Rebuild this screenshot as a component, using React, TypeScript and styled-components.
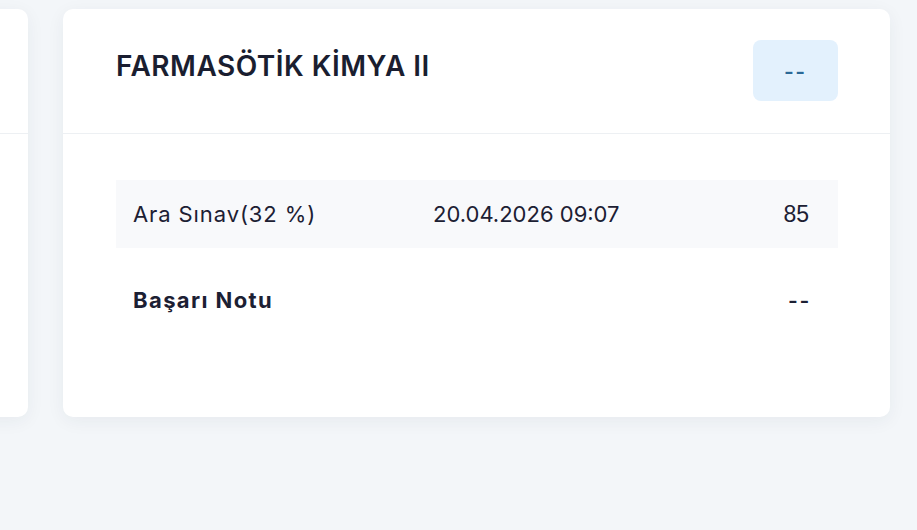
import { createGlobalStyle, styled } from 'styled-components';

interface GradeRow {
  label: string;
  date?: string;
  score: string;
  total?: boolean;
}

const rows: GradeRow[] = [
  { label: 'Ara Sınav(32 %)', date: '20.04.2026 09:07', score: '85' },
  { label: 'Başarı Notu', score: '--', total: true },
];

const GlobalStyle = createGlobalStyle`
  html, body {
    margin: 0;
    padding: 0;
    background: #f3f6f9;
  }
  body {
    font-family: Inter, "Noto Sans", sans-serif;
    color: #1c2033;
  }
`;

const App = () => {
  return (
    <>
      <GlobalStyle />
      <Page>
        <SideCard>
          <SideHeader />
        </SideCard>
        <Card>
          <Header>
            <Title>FARMASÖTİK KİMYA II</Title>
            <Badge>--</Badge>
          </Header>
          <Body>
            {rows.map((row) => (
              <Row key={row.label} $total={row.total}>
                <Label $bold={row.total}>{row.label}</Label>
                <DateCell>{row.date}</DateCell>
                <Score $dash={row.score === '--'}>{row.score}</Score>
              </Row>
            ))}
          </Body>
        </Card>
      </Page>
    </>
  );
};

const Page = styled.div`
  display: flex;
  gap: 35px;
  height: 530px;
  padding-top: 9px;
  box-sizing: border-box;
  margin-left: -300px;
  overflow: hidden;
`;

const SideCard = styled.section`
  width: 328px;
  height: 408px;
  flex-shrink: 0;
  background: #ffffff;
  border-radius: 10px;
  box-shadow: 0 4px 18px rgba(30, 45, 70, 0.06);
`;

const SideHeader = styled.div`
  height: 124px;
  border-bottom: 1px solid #edf0f3;
`;

const Card = styled.section`
  width: 827px;
  height: 408px;
  flex-shrink: 0;
  background: #ffffff;
  border-radius: 10px;
  box-shadow: 0 4px 18px rgba(30, 45, 70, 0.06);
`;

const Header = styled.header`
  display: flex;
  justify-content: space-between;
  align-items: center;
  padding: 31px 52px 32px 53px;
  border-bottom: 1px solid #edf0f3;
`;

const Title = styled.h2`
  margin: 0 0 8px;
  font-size: 28px;
  font-weight: 600;
  letter-spacing: 0.5px;
  line-height: 1.2;
  color: #1a1e30;
`;

const Badge = styled.div`
  width: 85px;
  height: 61px;
  display: flex;
  align-items: center;
  justify-content: center;
  background: #e3f1fd;
  border-radius: 8px;
  font-family: "Liberation Sans", Arial, sans-serif;
  font-size: 28px;
  letter-spacing: 2px;
  color: #2b6896;
`;

const Body = styled.div`
  padding: 46px 52px 0 53px;
`;

const Row = styled.div<{ $total?: boolean }>`
  display: grid;
  grid-template-columns: 300px 1fr auto;
  align-items: center;
  height: ${({ $total }) => ($total ? '104px' : '68px')};
  padding: 0 29px 0 17px;
  background: ${({ $total }) => ($total ? 'transparent' : '#f8f9fb')};
`;

const Label = styled.span<{ $bold?: boolean }>`
  font-size: 22px;
  font-weight: ${({ $bold }) => ($bold ? 700 : 400)};
  letter-spacing: ${({ $bold }) => ($bold ? '1.4px' : '0.9px')};
  color: #1c2033;
`;

const DateCell = styled.span`
  font-size: 22px;
  color: #1c2033;
`;

const Score = styled.span<{ $dash?: boolean }>`
  font-family: "Liberation Sans", Arial, sans-serif;
  font-size: ${({ $dash }) => ($dash ? '28px' : '23px')};
  letter-spacing: ${({ $dash }) => ($dash ? '2px' : '0')};
  margin-right: ${({ $dash }) => ($dash ? '-2px' : '0')};
  color: #1c2033;
`;

export default App;
